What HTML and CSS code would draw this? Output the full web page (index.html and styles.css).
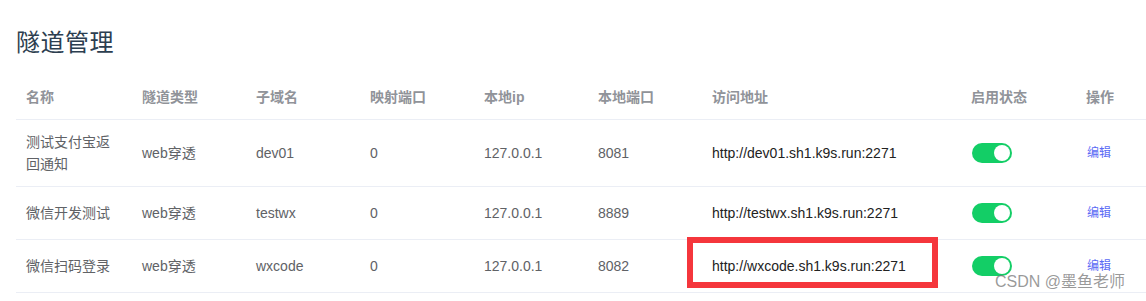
FILE: index.html
```html
<!DOCTYPE html>
<html lang="zh-CN">
<head>
<meta charset="utf-8">
<title>隧道管理</title>
<link rel="stylesheet" href="styles.css">
</head>
<body>
<div class="page">
  <h1 class="title">隧道管理</h1>
  <div class="table">
    <div class="row head">
      <div class="cell">名称</div>
      <div class="cell">隧道类型</div>
      <div class="cell">子域名</div>
      <div class="cell">映射端口</div>
      <div class="cell">本地ip</div>
      <div class="cell">本地端口</div>
      <div class="cell">访问地址</div>
      <div class="cell">启用状态</div>
      <div class="cell">操作</div>
    </div>
    <div class="row">
      <div class="cell">测试支付宝返<br>回通知</div>
      <div class="cell">web穿透</div>
      <div class="cell">dev01</div>
      <div class="cell">0</div>
      <div class="cell">127.0.0.1</div>
      <div class="cell">8081</div>
      <div class="cell url">http://dev01.sh1.k9s.run:2271</div>
      <div class="cell"><span class="switch"><span class="knob"></span></span></div>
      <div class="cell"><a class="edit">编辑</a></div>
    </div>
    <div class="row">
      <div class="cell">微信开发测试</div>
      <div class="cell">web穿透</div>
      <div class="cell">testwx</div>
      <div class="cell">0</div>
      <div class="cell">127.0.0.1</div>
      <div class="cell">8889</div>
      <div class="cell url">http://testwx.sh1.k9s.run:2271</div>
      <div class="cell"><span class="switch"><span class="knob"></span></span></div>
      <div class="cell"><a class="edit">编辑</a></div>
    </div>
    <div class="row">
      <div class="cell">微信扫码登录</div>
      <div class="cell">web穿透</div>
      <div class="cell">wxcode</div>
      <div class="cell">0</div>
      <div class="cell">127.0.0.1</div>
      <div class="cell">8082</div>
      <div class="cell url marked">http://wxcode.sh1.k9s.run:2271<span class="redbox"></span></div>
      <div class="cell"><span class="switch"><span class="knob"></span></span></div>
      <div class="cell"><a class="edit">编辑</a></div>
    </div>
  </div>
  <div class="watermark">CSDN @墨鱼老师</div>
</div>
</body>
</html>
```
FILE: styles.css
```css
html, body {
  margin: 0;
  padding: 0;
  background: #ffffff;
}
body {
  font-family: "Liberation Sans", Arial, "Noto Sans CJK SC", sans-serif;
  width: 1146px;
  height: 301px;
  overflow: hidden;
}
.page {
  position: relative;
  padding: 0 0 0 16px;
  height: 301px;
}
.title {
  margin: 0;
  padding-top: 25px;
  font-size: 24px;
  line-height: 32px;
  font-weight: normal;
  color: #2c3e50;
  font-family: "Noto Sans CJK SC", sans-serif;
  letter-spacing: 0.5px;
}
.table {
  margin-top: 18px;
}
.row {
  display: grid;
  grid-template-columns: 116px 114px 114px 114px 114px 114px 259px 115px 1fr;
  min-height: 52px;
  border-bottom: 1px solid #ebeef5;
  font-size: 14px;
  color: #606266;
}
.row.head {
  min-height: 44px;
  color: #909399;
  font-weight: bold;
}
.cell {
  display: flex;
  align-items: center;
  padding: 11px 10px;
  line-height: 22px;
  box-sizing: border-box;
}
.row .cell:first-child {
  display: block;
  align-self: center;
}
.url {
  color: #222222;
}
.marked {
  position: relative;
}
.redbox {
  position: absolute;
  left: -15px;
  top: -3px;
  width: 251px;
  height: 51px;
  border: 6px solid #f5363c;
  box-sizing: border-box;
}
.switch {
  position: relative;
  display: inline-block;
  width: 40px;
  height: 20px;
  border-radius: 10px;
  background: #13ce66;
  margin-left: 1px;
}
.knob {
  position: absolute;
  top: 2px;
  right: 2px;
  width: 16px;
  height: 16px;
  border-radius: 50%;
  background: #ffffff;
}
.edit {
  font-size: 12px;
  color: #5a6af5;
  margin-left: 1px;
  font-weight: normal;
}
.watermark {
  position: absolute;
  left: 995px;
  top: 272px;
  font-size: 16px;
  line-height: 20px;
  color: rgba(120, 120, 120, 0.75);
}
```
